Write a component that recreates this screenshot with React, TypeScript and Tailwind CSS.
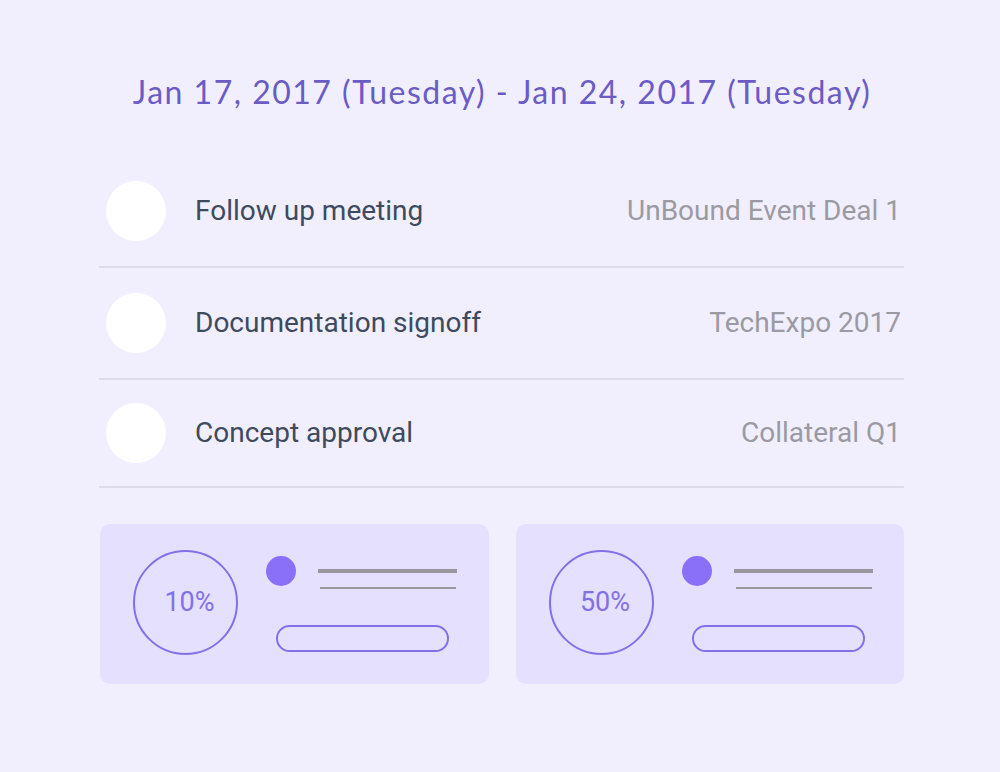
const tasks = [
  { title: 'Follow up meeting', deal: 'UnBound Event Deal 1', h: 'h-[112px]' },
  { title: 'Documentation signoff', deal: 'TechExpo 2017', h: 'h-[112px]' },
  { title: 'Concept approval', deal: 'Collateral Q1', h: 'h-[108px]' },
]

const StatCard = ({ pct }: { pct: string }) => (
  <div className="flex h-[160px] w-[389px] items-center rounded-[10px] bg-[#e5e0fd] pl-[33px]">
    <div className="mt-[-4px] flex h-[105px] w-[105px] items-center justify-center rounded-full border-2 border-[#8370e8] pl-[8px] text-[27px] text-[#8370e8]">
      {pct}
    </div>
    <div className="ml-[28px] flex flex-col">
      <div className="flex items-start">
        <span className="h-[30px] w-[30px] rounded-full bg-[#8a70f8]" />
        <div className="ml-[22px] flex w-[139px] flex-col pt-[13px]">
          <span className="h-[4px] w-full bg-[#99969f]" />
          <span className="mt-[14px] ml-[2px] h-[2px] w-[136px] bg-[#99969f]" />
        </div>
      </div>
      <div className="mt-[36px] ml-[10px] h-[27px] w-[173px] rounded-full border-2 border-[#8370e8]" />
    </div>
  </div>
)

export default function App() {
  return (
    <div
      className="flex min-h-[772px] w-[1000px] flex-col items-center bg-[#f1effd]"
      style={{ fontFamily: 'Roboto, sans-serif' }}
    >
      <h1 className="ml-[4px] pt-[72px] font-['Lato',sans-serif] text-[32px] leading-[40px] tracking-[1.5px] text-[#6a5bc5]">
        Jan 17, 2017 (Tuesday) - Jan 24, 2017 (Tuesday)
      </h1>
      <div className="mt-[44px] ml-[3px] w-[805px]">
        {tasks.map((t) => (
          <div
            key={t.title}
            className={`flex items-center border-b-2 border-[#dddbe8] pl-[7px] pr-[3px] ${t.h}`}
          >
            <span className="h-[60px] w-[60px] rounded-full bg-white" />
            <span className="ml-[29px] text-[28px] text-[#3e4a5e]">{t.title}</span>
            <span className="ml-auto text-[28px] text-[#9b9aa3]">{t.deal}</span>
          </div>
        ))}
        <div className="mt-[36px] ml-px flex gap-[27px]">
          <StatCard pct="10%" />
          <StatCard pct="50%" />
        </div>
      </div>
    </div>
  )
}
